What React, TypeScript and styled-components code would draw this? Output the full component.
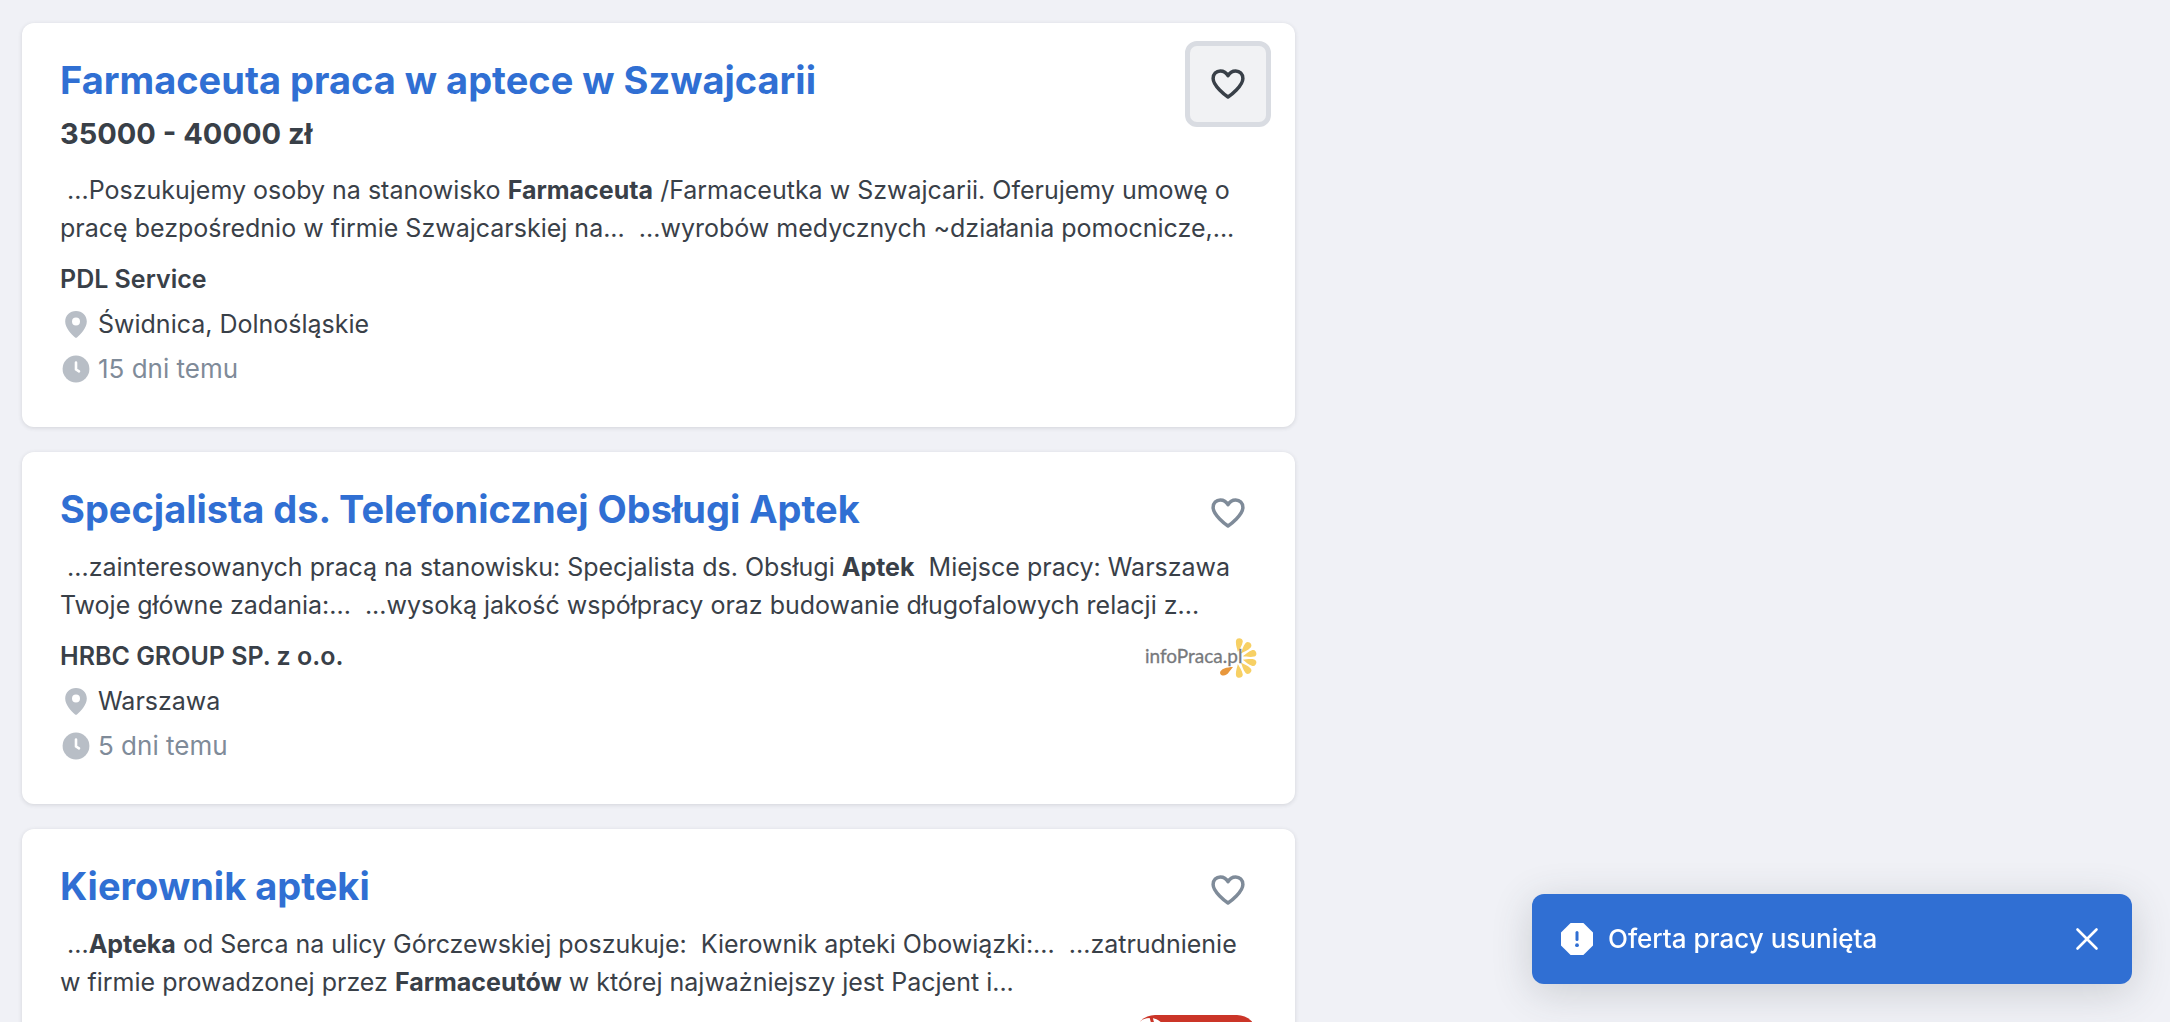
import React from 'react';
import styled, { createGlobalStyle } from 'styled-components';

const GlobalStyle = createGlobalStyle`
  *, *::before, *::after { box-sizing: border-box; }
  body {
    margin: 0;
    height: 100vh;
    overflow: hidden;
    background: #f0f1f6;
    color: #394048;
    font-family: Inter, "Liberation Sans", sans-serif;
    font-size: 25px;
    line-height: 38px;
  }
`;

const Page = styled.main`
  padding: 23px 22px;
`;

const OfferList = styled.ul`
  display: flex;
  flex-direction: column;
  gap: 25px;
  width: 60%;
  max-width: 1273px;
  margin: 0;
  padding: 0;
  list-style: none;
`;

const Card = styled.li`
  padding: 31px 38px 39px;
  border-radius: 12px;
  background: #fff;
  box-shadow: 0 1px 4px rgba(57, 64, 72, 0.16);
`;

const CardHeader = styled.header`
  display: flex;
  align-items: flex-start;
  justify-content: space-between;
`;

const Title = styled.h2`
  margin: 0;
  font-size: 38px;
  line-height: 52px;
  font-weight: 700;
`;

const TitleLink = styled.a`
  color: #306fd3;
  text-decoration: none;
`;

const SaveButton = styled.button<{ $active?: boolean }>`
  display: grid;
  place-items: center;
  width: 86px;
  height: 86px;
  margin: -13px -14px -21px 0;
  padding: 0;
  border: 5px solid ${(p) => (p.$active ? '#d9dce2' : 'transparent')};
  border-radius: 12px;
  background: ${(p) => (p.$active ? '#f1f2f4' : 'transparent')};
  color: ${(p) => (p.$active ? '#394048' : '#7f8b99')};
  cursor: pointer;
`;

const Salary = styled.p`
  margin: 4px 0 0;
  font-size: 29px;
  line-height: 48px;
  font-weight: 700;
`;

const Description = styled.p`
  margin: 13px 0 0;
  white-space: pre-wrap;
`;

const CardFooter = styled.div`
  display: flex;
  align-items: flex-start;
  justify-content: space-between;
  margin-top: 13px;
`;

const Facts = styled.div`
  display: flex;
  flex-direction: column;
  gap: 7px;
`;

const Company = styled.strong`
  font-weight: 600;
`;

const Fact = styled.span`
  display: flex;
  align-items: center;
  gap: 6px;
`;

const PostedAt = styled(Fact)`
  color: #7f8b99;
  font-size: 26px;
`;

const Toast = styled.div`
  position: fixed;
  right: 38px;
  bottom: 38px;
  display: flex;
  align-items: center;
  gap: 14px;
  width: 600px;
  height: 90px;
  padding: 0 28px;
  border-radius: 12px;
  background: #306fd3;
  color: #fff;
  font-size: 26px;
  font-weight: 500;
  box-shadow: 0 8px 40px rgba(57, 64, 72, 0.2);
`;

const CloseButton = styled.button`
  display: grid;
  place-items: center;
  margin-left: auto;
  padding: 0;
  border: 0;
  background: none;
  color: inherit;
  cursor: pointer;
`;

const HeartIcon = () => (
  <svg width="38" height="38" viewBox="0 0 24 24" fill="none" stroke="currentColor" strokeWidth="2.2" strokeLinejoin="round" aria-hidden="true">
    <path d="M12 20.2 C10.5 19.2 2.6 13.2 2.6 8.5 C2.6 5.7 4.6 3.8 7.1 3.8 C9.3 3.8 11 4.9 12 6.8 C13 4.9 14.7 3.8 16.9 3.8 C19.4 3.8 21.4 5.7 21.4 8.5 C21.4 13.2 13.5 19.2 12 20.2 Z" />
  </svg>
);

const PinIcon = () => (
  <svg width="32" height="32" viewBox="0 0 32 32" aria-hidden="true">
    <path fill="#b8bec6" fillRule="evenodd" d="M16 3 C9.8 3 5.2 7.6 5.2 13.4 C5.2 20 11.5 26 14.8 29.2 Q16 30.2 17.2 29.2 C20.5 26 26.8 20 26.8 13.4 C26.8 7.6 22.2 3 16 3 Z M16 9.6 A4 4 0 1 1 16 17.6 A4 4 0 1 1 16 9.6 Z" />
  </svg>
);

const ClockIcon = () => (
  <svg width="32" height="32" viewBox="0 0 32 32" aria-hidden="true">
    <circle cx="16" cy="16" r="13.4" fill="#b8bec6" />
    <path d="M16 9.5 V16.5 L19 18.4" fill="none" stroke="#fff" strokeWidth="2.6" strokeLinecap="round" strokeLinejoin="round" />
  </svg>
);

const AlertIcon = () => (
  <svg width="34" height="34" viewBox="0 0 34 34" aria-hidden="true">
    <path fill="#fff" d="M10.6 1 H23.4 L33 10.6 V23.4 L23.4 33 H10.6 L1 23.4 V10.6 Z" />
    <path d="M17 10.5 V17.5" stroke="#306fd3" strokeWidth="3" strokeLinecap="round" />
    <circle cx="17" cy="23.2" r="1.9" fill="#306fd3" />
  </svg>
);

const CloseIcon = () => (
  <svg width="34" height="34" viewBox="0 0 34 34" fill="none" stroke="currentColor" strokeWidth="2.6" strokeLinecap="round" aria-hidden="true">
    <path d="M7.5 7.5 L26.5 26.5 M26.5 7.5 L7.5 26.5" />
  </svg>
);

const InfoPracaLogo = () => (
  <svg width="114" height="42" viewBox="0 0 114 42" role="img" aria-label="infoPraca.pl">
    <g fill="#f7d064">
      {[-82, -49, -16, 16, 49, 82].map((a) => (
        <path key={a} transform={`translate(94 21) rotate(${a})`} d="M6 0 C9 -1 13 -3.4 17 -3.4 C21 -3.4 21 3.4 17 3.4 C13 3.4 9 1 6 0 Z" />
      ))}
    </g>
    <path fill="#e8973c" d="M90 30 C84 30 77 32 77 36 C78 40 84 39 86 35 Z" />
    <text x="2" y="26" fontFamily="Lato, sans-serif" fontSize="19" fill="#77797c" stroke="#77797c" strokeWidth="0.3">infoPraca.pl</text>
  </svg>
);

const RedLogo = () => (
  <svg width="122" height="42" viewBox="0 0 122 42" role="img" aria-label="Apteka">
    <rect x="0" y="1" width="122" height="60" rx="20" fill="#cb3528" />
    <ellipse cx="15" cy="22" rx="17" ry="18" fill="#fff" />
    <path d="M16 3 L19 14" stroke="#cb3528" strokeWidth="3" />
  </svg>
);

type Offer = {
  title: string;
  salary?: string;
  description: React.ReactNode;
  company?: string;
  place?: string;
  date?: string;
  logo?: React.ReactNode;
  active?: boolean;
};

const offers: Offer[] = [
  {
    title: 'Farmaceuta praca w aptece w Szwajcarii',
    salary: '35000 - 40000 zł',
    description: (
      <>
        {'\u00a0...Poszukujemy osoby na stanowisko '}<b>Farmaceuta</b>
        {' /Farmaceutka w Szwajcarii. Oferujemy umowę o pracę bezpośrednio w firmie Szwajcarskiej na...\u00a0 ...wyrobów medycznych ~działania pomocnicze,...'}
      </>
    ),
    company: 'PDL Service',
    place: 'Świdnica, Dolnośląskie',
    date: '15 dni temu',
    active: true,
  },
  {
    title: 'Specjalista ds. Telefonicznej Obsługi Aptek',
    description: (
      <>
        {'\u00a0...zainteresowanych pracą na stanowisku: Specjalista ds. Obsługi '}<b>Aptek</b>
        {'\u00a0 Miejsce pracy: Warszawa Twoje główne zadania:...\u00a0 ...wysoką jakość współpracy oraz budowanie długofalowych relacji z...'}
      </>
    ),
    company: 'HRBC GROUP SP. z o.o.',
    place: 'Warszawa',
    date: '5 dni temu',
    logo: <InfoPracaLogo />,
  },
  {
    title: 'Kierownik apteki',
    description: (
      <>
        {'\u00a0...'}<b>Apteka</b>{' od Serca na ulicy Górczewskiej poszukuje:\u00a0 Kierownik apteki Obowiązki:...\u00a0 ...zatrudnienie w firmie prowadzonej przez '}
        <b>Farmaceutów</b>{' w której najważniejszy jest Pacjent i...'}
      </>
    ),
    logo: <RedLogo />,
  },
];

const OfferCard = ({ offer }: { offer: Offer }) => (
  <Card>
    <CardHeader>
      <Title><TitleLink href="#">{offer.title}</TitleLink></Title>
      <SaveButton type="button" $active={offer.active} aria-label="Zapisz ofertę" aria-pressed={false}>
        <HeartIcon />
      </SaveButton>
    </CardHeader>
    {offer.salary && <Salary>{offer.salary}</Salary>}
    <Description>{offer.description}</Description>
    <CardFooter>
      <Facts>
        {offer.company && <Company>{offer.company}</Company>}
        {offer.place && <Fact><PinIcon />{offer.place}</Fact>}
        {offer.date && <PostedAt><ClockIcon />{offer.date}</PostedAt>}
      </Facts>
      {offer.logo}
    </CardFooter>
  </Card>
);

export default function App() {
  return (
    <>
      <GlobalStyle />
      <Page>
        <OfferList>
          {offers.map((offer) => <OfferCard key={offer.title} offer={offer} />)}
        </OfferList>
      </Page>
      <Toast role="status">
        <AlertIcon />
        Oferta pracy usunięta
        <CloseButton type="button" aria-label="Zamknij"><CloseIcon /></CloseButton>
      </Toast>
    </>
  );
}
